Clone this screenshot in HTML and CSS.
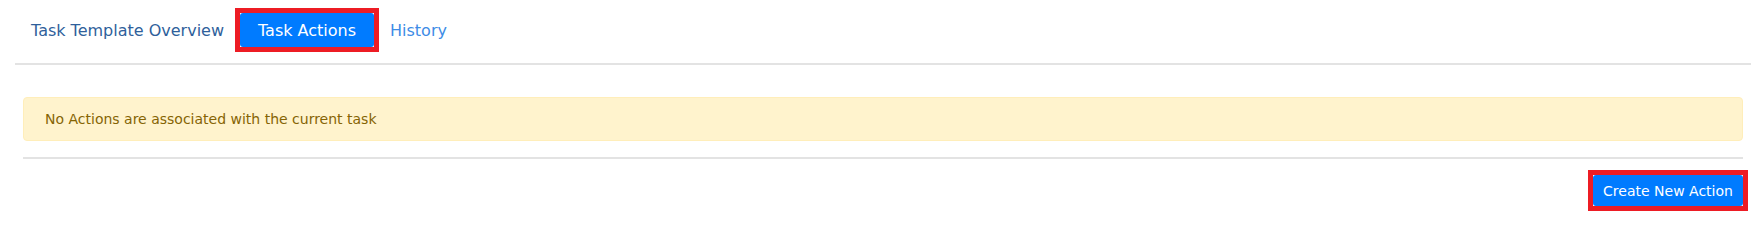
FILE: index.html
```html
<!DOCTYPE html>
<html>
<head>
<meta charset="utf-8">
<link rel="stylesheet" href="styles.css">
</head>
<body>
<div class="card">
  <div class="card-header">
    <nav class="tabs">
      <a class="tab tab-overview">Task Template Overview</a>
      <span class="highlight"><a class="tab tab-active">Task Actions</a></span>
      <a class="tab tab-history">History</a>
    </nav>
  </div>
  <div class="card-body">
    <div class="alert">No Actions are associated with the current task</div>
    <hr class="divider">
    <div class="actions">
      <span class="highlight"><button class="btn-primary">Create New Action</button></span>
    </div>
  </div>
</div>
</body>
</html>
```
FILE: styles.css
```css
* { box-sizing: border-box; }
html, body { margin: 0; padding: 0; background: #fff; }
body {
  font-family: "DejaVu Sans", "Open Sans", sans-serif;
  width: 1764px;
  height: 226px;
  overflow: hidden;
}
.card {
  height: 226px;
  padding: 0 13px 0 15px;
}
.card-header {
  height: 65px;
  padding-top: 8px;
  border-bottom: 2px solid #e3e3e3;
}
.tabs {
  display: flex;
  align-items: center;
  height: 44px;
}
.tab {
  font-size: 16px;
  text-decoration: none;
  white-space: nowrap;
  cursor: pointer;
}
.tab-overview {
  color: #2f5f9b;
  padding-left: 16px;
  width: 220px;
}
.tab-history {
  color: #3d8ce6;
  margin-left: 11px;
}
.highlight {
  display: inline-flex;
  border: 5px solid #ed1c24;
  background: #fff;
}
.tab-active {
  display: flex;
  align-items: center;
  justify-content: center;
  width: 134px;
  height: 34px;
  background: #007bff;
  color: #fff;
  border-radius: 3px;
}
.card-body {
  padding: 32px 8px 0 8px;
}
.alert {
  height: 44px;
  display: flex;
  align-items: center;
  padding-left: 21px;
  background: #fff3cd;
  border: 1px solid #ffeeba;
  border-radius: 4px;
  color: #856404;
  font-size: 14px;
}
.divider {
  margin: 16px 0 0 0;
  border: 0;
  border-top: 2px solid #e3e3e3;
  height: 0;
}
.actions {
  display: flex;
  justify-content: flex-end;
  padding-top: 11px;
  margin-right: -5px;
}
.btn-primary {
  width: 150px;
  height: 31px;
  border: 0;
  border-radius: 3px;
  background: #007bff;
  color: #fff;
  font-family: inherit;
  font-size: 14px;
  padding: 0;
  cursor: pointer;
}
```
